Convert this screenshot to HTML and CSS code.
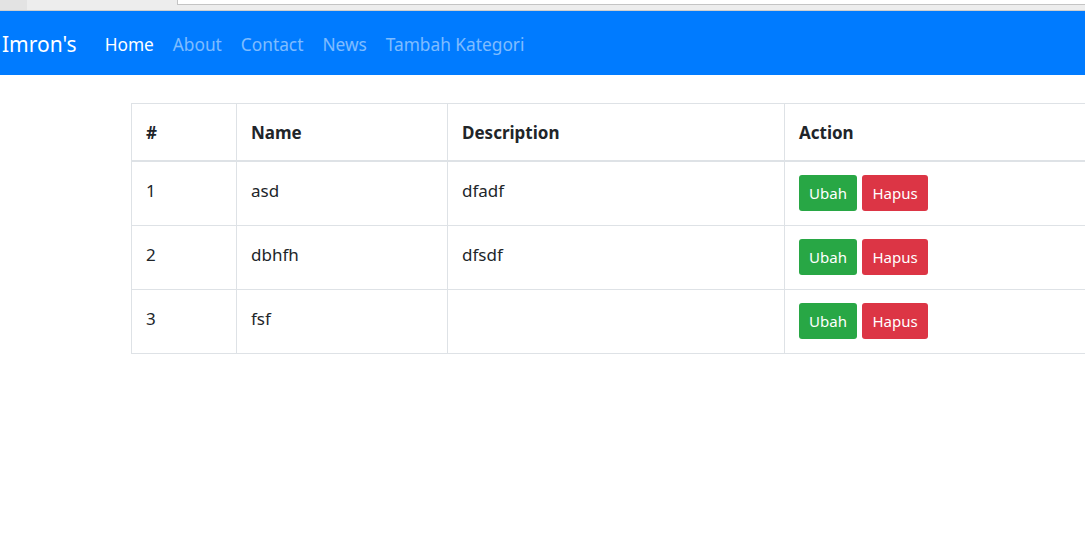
FILE: index.html
```html
<!DOCTYPE html>
<html lang="id">
<head>
<meta charset="utf-8">
<title>Imron's</title>
<link rel="stylesheet" href="styles.css">
</head>
<body>
<div class="chrome">
  <div class="chrome-side"></div>
  <div class="chrome-main"><div class="chrome-input"></div></div>
</div>
<nav class="navbar">
  <a class="brand" href="#">Imron's</a>
  <ul class="nav">
    <li><a class="nav-link active" href="#">Home</a></li>
    <li><a class="nav-link" href="#">About</a></li>
    <li><a class="nav-link" href="#">Contact</a></li>
    <li><a class="nav-link" href="#">News</a></li>
    <li><a class="nav-link" href="#">Tambah Kategori</a></li>
  </ul>
</nav>
<main class="content">
  <table class="table">
    <thead>
      <tr><th class="c-no">#</th><th class="c-name">Name</th><th class="c-desc">Description</th><th class="c-act">Action</th></tr>
    </thead>
    <tbody>
      <tr><td>1</td><td>asd</td><td>dfadf</td><td class="act"><div class="actions"><a class="btn btn-green" href="#">Ubah</a><a class="btn btn-red" href="#">Hapus</a></div></td></tr>
      <tr><td>2</td><td>dbhfh</td><td>dfsdf</td><td class="act"><div class="actions"><a class="btn btn-green" href="#">Ubah</a><a class="btn btn-red" href="#">Hapus</a></div></td></tr>
      <tr><td>3</td><td>fsf</td><td></td><td class="act"><div class="actions"><a class="btn btn-green" href="#">Ubah</a><a class="btn btn-red" href="#">Hapus</a></div></td></tr>
    </tbody>
  </table>
</main>
</body>
</html>
```
FILE: styles.css
```css
html, body {
  margin: 0;
  padding: 0;
  overflow: hidden;
  background: #fff;
}
body {
  font-family: "Noto Sans", "Open Sans", sans-serif;
  color: #212529;
  width: 1085px;
}
.chrome {
  display: flex;
  height: 10px;
  border-bottom: 1px solid #cfcfcf;
  background: #ededed;
}
.chrome-side {
  width: 27px;
  background: #e3e3e3;
}
.chrome-main {
  flex: 1;
  padding-left: 150px;
}
.chrome-input {
  height: 4px;
  background: #fff;
  border-left: 1px solid #c4c4c4;
  border-bottom: 1px solid #c4c4c4;
}
.navbar {
  display: flex;
  align-items: center;
  height: 64px;
  box-sizing: border-box;
  padding: 2px 0 0 2px;
  background: #007bff;
}
.brand {
  color: #fff;
  font-size: 21px;
  text-decoration: none;
  margin-right: 19px;
}
.nav {
  display: flex;
  list-style: none;
  margin: 0;
  padding: 0;
  gap: 1px;
}
.nav-link {
  display: block;
  padding: 0 9px;
  font-size: 17.3px;
  color: rgba(255, 255, 255, 0.5);
  text-decoration: none;
}
.nav-link.active {
  color: #fff;
}
.content {
  padding: 28px 0 0 131px;
}
.table {
  border-collapse: collapse;
  width: 1100px;
  font-size: 17px;
}
.table th, .table td {
  border: 1px solid #dee2e6;
  padding: 0 14px;
  text-align: left;
}
.table th {
  height: 56px;
  font-weight: 700;
  vertical-align: middle;
  border-bottom: 2px solid #dee2e6;
}
.table td {
  vertical-align: top;
  padding-top: 17px;
  line-height: 24px;
}
.table td.act {
  padding-top: 13px;
  padding-bottom: 14px;
}
.c-no { width: 76px; }
.c-name { width: 182px; }
.c-desc { width: 308px; }
.actions {
  display: flex;
  gap: 5px;
}
.btn {
  display: inline-flex;
  align-items: center;
  justify-content: center;
  height: 36px;
  padding: 0 10px;
  font-size: 15px;
  color: #fff;
  text-decoration: none;
  border-radius: 3px;
  box-sizing: border-box;
}
.btn-green { background: #28a745; width: 58px; }
.btn-red { background: #dc3545; width: 66px; }
```
